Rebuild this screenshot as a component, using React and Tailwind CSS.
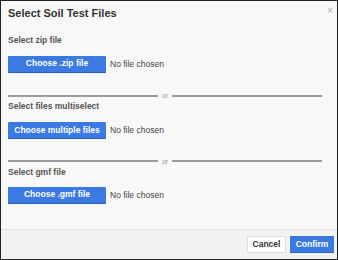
import React from 'react'

function FileRow({ label }) {
  return (
    <div className="flex items-center h-[17px]">
      <button className="w-[98px] h-[17px] bg-[#3b79e3] border-b border-[#2a5fc0] rounded-[1px] text-white text-[8.5px] font-bold leading-none whitespace-nowrap">
        {label}
      </button>
      <span className="ml-[4px] text-[8.5px] text-[#444] leading-none">No file chosen</span>
    </div>
  )
}

function OrDivider() {
  return (
    <div className="flex items-center w-[314px] h-[6px]">
      <div className="flex-1 h-[2px] bg-[#9c9c9c]" />
      <span className="px-[4px] text-[7px] leading-none text-[#999]">or</span>
      <div className="flex-1 h-[2px] bg-[#9c9c9c]" />
    </div>
  )
}

export default function App() {
  return (
    <div className="w-[338px] h-[260px] border border-[#222] bg-[#f8f8f8] flex flex-col font-['Liberation_Sans',Arial,sans-serif] overflow-hidden">
      {/* Header */}
      <div className="relative h-[24px] flex items-center pl-[7px]">
        <h1 className="text-[11px] font-bold text-[#333] leading-none">Select Soil Test Files</h1>
        <span className="absolute right-[4px] top-[5px] text-[10px] text-[#c4c4c4] font-bold leading-none">×</span>
      </div>

      {/* Body */}
      <div className="flex-1 px-[7px]">
        <p className="mt-[11px] text-[8.5px] font-bold text-[#555] leading-none">Select zip file</p>
        <div className="mt-[11px]">
          <FileRow label="Choose .zip file" />
        </div>
        <div className="mt-[20px]">
          <OrDivider />
        </div>
        <p className="mt-[3px] text-[8.5px] font-bold text-[#555] leading-none">Select files multiselect</p>
        <div className="mt-[12px]">
          <FileRow label="Choose multiple files" />
        </div>
        <div className="mt-[19px]">
          <OrDivider />
        </div>
        <p className="mt-[4px] text-[8.5px] font-bold text-[#555] leading-none">Select gmf file</p>
        <div className="mt-[10px]">
          <FileRow label="Choose .gmf file" />
        </div>
      </div>

      {/* Footer */}
      <div className="h-[30px] border-t border-[#e2e2e2] bg-[#f2f2f2] flex items-center justify-end gap-[4px] pr-[3px]">
        <button className="h-[17px] w-[39px] bg-white border border-[#dcdcdc] rounded-[1px] text-[8.5px] font-bold text-[#333] leading-none">
          Cancel
        </button>
        <button className="h-[17px] w-[44px] bg-[#3b79e3] border-b border-[#2a5fc0] rounded-[1px] text-[8.5px] font-bold text-white leading-none">
          Confirm
        </button>
      </div>
    </div>
  )
}
